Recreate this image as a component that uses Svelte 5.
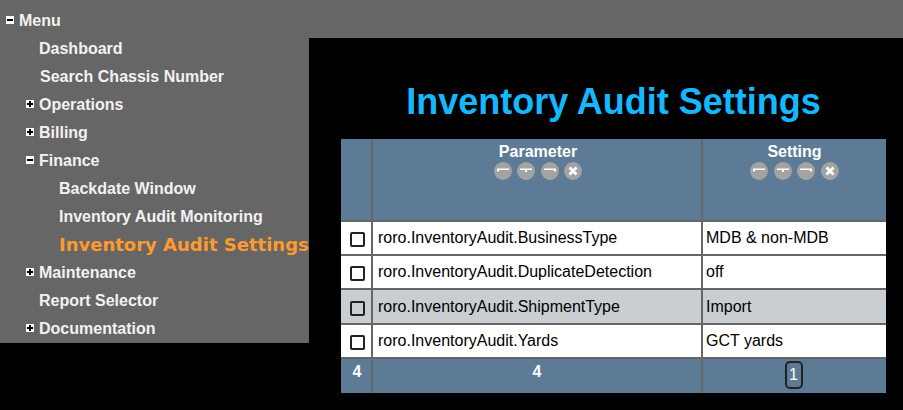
<script lang="ts">
  type MenuItem = { label: string; level: number; toggle?: 'open' | 'closed'; active?: boolean; nudge?: boolean };

  const menu: MenuItem[] = [
    { label: 'Dashboard', level: 1 },
    { label: 'Search Chassis Number', level: 1, nudge: true },
    { label: 'Operations', level: 1, toggle: 'closed' },
    { label: 'Billing', level: 1, toggle: 'closed' },
    { label: 'Finance', level: 1, toggle: 'open' },
    { label: 'Backdate Window', level: 2 },
    { label: 'Inventory Audit Monitoring', level: 2 },
    { label: 'Inventory Audit Settings', level: 2, active: true },
    { label: 'Maintenance', level: 1, toggle: 'closed' },
    { label: 'Report Selector', level: 1 },
    { label: 'Documentation', level: 1, toggle: 'closed' }
  ];

  const rows = [
    { parameter: 'roro.InventoryAudit.BusinessType', setting: 'MDB & non-MDB' },
    { parameter: 'roro.InventoryAudit.DuplicateDetection', setting: 'off' },
    { parameter: 'roro.InventoryAudit.ShipmentType', setting: 'Import', hover: true },
    { parameter: 'roro.InventoryAudit.Yards', setting: 'GCT yards' }
  ];
</script>

{#snippet toggle(kind: 'open' | 'closed')}
  <svg class="toggle" viewBox="0 0 8 8" width="8" height="8" aria-hidden="true">
    <rect width="8" height="8" fill="#fff" />
    <rect x="1" y="3" width="6" height="2" fill="#000" />
    {#if kind === 'closed'}
      <rect x="3" y="1" width="2" height="6" fill="#000" />
    {/if}
  </svg>
{/snippet}

{#snippet filters()}
  <div class="filters">
    <svg viewBox="0 0 18 18" width="18" height="18" aria-hidden="true">
      <circle cx="9" cy="9" r="9" fill="#a3a3a3" />
      <path d="M3 6.5h12V8H5v1.5H3z" fill="#fff" />
    </svg>
    <svg viewBox="0 0 18 18" width="18" height="18" aria-hidden="true">
      <circle cx="9" cy="9" r="9" fill="#a3a3a3" />
      <path d="M3 6.5h12V8H10v2H8V8H3z" fill="#fff" />
    </svg>
    <svg viewBox="0 0 18 18" width="18" height="18" aria-hidden="true">
      <circle cx="9" cy="9" r="9" fill="#a3a3a3" />
      <path d="M3 6.5h12v3h-2V8H3z" fill="#fff" />
    </svg>
    <svg viewBox="0 0 18 18" width="18" height="18" aria-hidden="true">
      <circle cx="9" cy="9" r="9" fill="#a3a3a3" />
      <path d="M5.5 5.5l7 7M12.5 5.5l-7 7" stroke="#fff" stroke-width="2.8" fill="none" />
    </svg>
  </div>
{/snippet}

<header class="topbar">
  <div class="item root">
    {@render toggle('open')}
    <span>Menu</span>
  </div>
</header>

<div class="body">
  <nav class="sidebar">
    {#each menu as item}
      <div class="item" class:sub={item.level === 2} class:active={item.active} class:nudge={item.nudge}>
        {#if item.toggle}
          {@render toggle(item.toggle)}
        {/if}
        <span>{item.label}</span>
      </div>
    {/each}
  </nav>

  <main class="content">
    <h1>Inventory Audit Settings</h1>
    <table>
      <colgroup>
        <col class="col-check" />
        <col class="col-param" />
        <col />
      </colgroup>
      <thead>
        <tr>
          <th></th>
          <th class="param">Parameter{@render filters()}</th>
          <th>Setting{@render filters()}</th>
        </tr>
      </thead>
      <tbody>
        {#each rows as row}
          <tr class:hover={row.hover}>
            <td class="check"><input type="checkbox" /></td>
            <td>{row.parameter}</td>
            <td>{row.setting}</td>
          </tr>
        {/each}
      </tbody>
      <tfoot>
        <tr>
          <td class="count">4</td>
          <td>4</td>
          <td class="pager"><button type="button">1</button></td>
        </tr>
      </tfoot>
    </table>
  </main>
</div>

<style>
  :global(body) {
    background: #000;
    font-family: "Liberation Sans", Arial, sans-serif;
    font-size: 16px;
    overflow: hidden;
  }

  .topbar {
    height: 38px;
    background: #666;
    padding-top: 6px;
    box-sizing: border-box;
  }

  .body {
    display: flex;
    align-items: flex-start;
  }

  .sidebar {
    width: 309px;
    height: 309px;
    margin-top: -4px;
    background: #666;
    flex-shrink: 0;
    white-space: nowrap;
  }

  .item {
    display: flex;
    align-items: center;
    height: 28px;
    padding-left: 39px;
    padding-top: 1px;
    box-sizing: border-box;
    position: relative;
    color: #f2f2f2;
    font-weight: bold;
    font-size: 16px;
  }

  .item.root {
    padding-left: 19px;
  }

  .item.nudge {
    padding-left: 40px;
  }

  .item.sub {
    padding-left: 59px;
  }

  .item.active {
    color: #ff9a2e;
    font-family: "DejaVu Sans", Verdana, sans-serif;
    font-size: 18px;
  }

  .toggle {
    position: absolute;
    margin-left: -13px;
    margin-top: -1px;
  }

  .content {
    flex: 1;
    padding: 0 17px 0 32px;
  }

  h1 {
    margin: 0;
    height: 101px;
    padding-top: 41px;
    box-sizing: border-box;
    text-align: center;
    font-size: 36px;
    line-height: 45px;
    font-weight: bold;
    color: #14b8ff;
    white-space: nowrap;
  }

  table {
    width: 545px;
    table-layout: fixed;
    border-collapse: separate;
    border-spacing: 0;
  }

  .col-check {
    width: 30px;
  }

  .col-param {
    width: 330px;
  }

  th {
    height: 81px;
    box-sizing: border-box;
    background: #5d7a96;
    color: #fff;
    font-size: 16px;
    vertical-align: top;
    padding: 4px 0 0;
    line-height: 18px;
  }

  th.param {
    padding-left: 2px;
  }

  th + th,
  td + td {
    border-left: 2px solid #666;
  }

  tbody td {
    height: 32px;
    padding: 0 0 0 5px;
    background: #fff;
    border-top: 2px solid #666;
    color: #000;
    line-height: 18px;
  }

  tbody td:last-child {
    padding-left: 3px;
  }

  tbody tr.hover td {
    height: 33px;
    background: #c8ced2;
  }

  tbody td.check {
    padding: 0;
  }

  input {
    appearance: none;
    display: block;
    width: 15px;
    height: 15px;
    margin: 3px 0 0 9px;
    border: 2px solid #222;
    border-radius: 2px;
    background: transparent;
    box-sizing: border-box;
  }

  tfoot td {
    height: 36px;
    padding: 4px 0 0;
    background: #5d7a96;
    border-top: 2px solid #666;
    color: #fff;
    font-weight: bold;
    text-align: center;
    vertical-align: top;
    box-sizing: border-box;
    line-height: 18px;
  }

  tfoot td.count {
    padding-left: 2px;
  }

  tfoot td.pager {
    padding: 2px 2px 0 0;
  }

  button {
    display: block;
    width: 18px;
    height: 28px;
    padding: 0 0 1px;
    margin: 0 auto;
    border: 2px solid #222;
    border-radius: 5px;
    background: #5d7a96;
    color: #fff;
    font: 16px "Liberation Sans", Arial, sans-serif;
  }

  .filters {
    display: flex;
    justify-content: center;
    gap: 5.67px;
    margin-top: 1px;
  }
</style>
